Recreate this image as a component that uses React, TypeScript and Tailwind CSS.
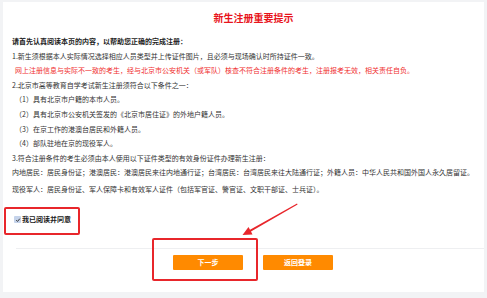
import React from 'react';

const lines: { text: string; red?: boolean; indent?: boolean }[] = [
  { text: '1.新生须根据本人实际情况选择相应人员类型并上传证件图片，且必须与现场确认时所持证件一致。' },
  { text: '网上注册信息与实际不一致的考生，经与北京市公安机关（或军队）核查不符合注册条件的考生，注册报考无效，相关责任自负。', red: true, indent: true },
  { text: '2.北京市高等教育自学考试新生注册须符合以下条件之一：' },
  { text: '（1）具有北京市户籍的本市人员。', indent: true },
  { text: '（2）具有北京市公安机关签发的《北京市居住证》的外地户籍人员。', indent: true },
  { text: '（3）在京工作的港澳台居民和外籍人员。', indent: true },
  { text: '（4）部队驻地在京的现役军人。', indent: true },
  { text: '3.符合注册条件的考生必须由本人使用以下证件类型的有效身份证件办理新生注册：' },
  { text: '内地居民：居民身份证；港澳居民：港澳居民来往内地通行证；台湾居民：台湾居民来往大陆通行证；外籍人员：中华人民共和国外国人永久居留证。' },
];

export default function App() {
  return (
    <div
      className="w-[487px] h-[298px] bg-[#f2f3f5] pt-[2px] pl-[3px] overflow-hidden relative"
      style={{ fontFamily: '"Noto Sans CJK SC", "Noto Sans", sans-serif' }}
    >
      <div className="w-[481px] h-[290px] bg-white flex flex-col">
        <h1 className="pt-[9px] text-center text-[10px] leading-[14px] font-bold text-[#e8141c] pl-[20px]">
          新生注册重要提示
        </h1>

        <div className="pl-[9px] pt-[9px] text-[7px] leading-[14.6px] text-[#333] whitespace-nowrap">
          <p className="font-bold text-[#222]">请首先认真阅读本页的内容，以帮助您正确的完成注册：</p>
          {lines.map((l, i) => (
            <p
              key={i}
              className={(l.red ? 'text-[#f03030] ' : '') + (l.indent ? 'pl-[3px]' : '')}
            >
              {l.text}
            </p>
          ))}
          <p className="mt-[2px]">
            现役军人：居民身份证、军人保障卡和有效军人证件（包括军官证、警官证、文职干部证、士兵证）。
          </p>
        </div>

        <div className="ml-px mt-[10px] w-[76px] h-[28px] border-2 border-[#e8262b] rounded-[2px] flex items-center pl-[8px] pb-[2px]">
          <span className="w-[7px] h-[7px] bg-[#c5d3ea] rounded-[1px] flex items-center justify-center">
            <svg viewBox="0 0 10 10" className="w-[6px] h-[6px]">
              <path d="M2 5.2 L4.2 7.4 L8 2.8" fill="none" stroke="#333" strokeWidth="1.6" />
            </svg>
          </span>
          <span className="ml-px text-[7px] font-bold text-[#222]">我已阅读并同意</span>
        </div>

        <div className="ml-[13px] mt-[13px] h-px bg-[#eeeff1]" />

        <div className="flex gap-[20px] pl-[170px] pt-[6px]">
          <button className="w-[70px] h-[15px] bg-[#ff8a00] text-white text-[7px] font-bold rounded-[1px] leading-[15px]">
            下一步
          </button>
          <button className="w-[70px] h-[15px] bg-[#ff8a00] text-white text-[7px] font-bold rounded-[1px] leading-[15px]">
            返回登录
          </button>
        </div>
      </div>

      {/* annotation: box around the next button */}
      <div className="absolute left-[152px] top-[238px] w-[106px] h-[43px] border-2 border-[#e8262b] rounded-[2px]" />

      {/* annotation arrow */}
      <svg className="absolute left-0 top-0 pointer-events-none" width="487" height="298">
        <polygon points="297,203.5 297.6,204.6 251,231.5 252.5,234.5 242.5,235 248.5,227 250,229.8" fill="#e8262b" />
      </svg>
    </div>
  );
}
